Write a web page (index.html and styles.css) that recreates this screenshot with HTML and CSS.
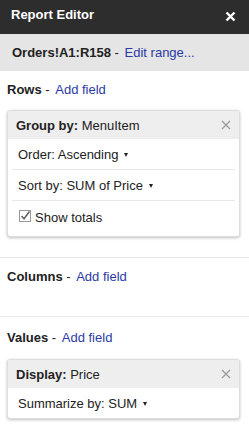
FILE: index.html
```html
<!DOCTYPE html>
<html lang="en">
<head>
    <meta charset="UTF-8">
    <meta name="viewport" content="width=device-width, initial-scale=1.0">
    <title>Report Editor</title>
    <link rel="stylesheet" href="styles.css">
</head>
<body>
    <div id="editor">
        <div class="title-bar">
            <span class="title">Report Editor</span>
            <svg class="close-white" width="11" height="11" viewBox="0 0 11 11">
                <path d="M1.5 1.5 L9.5 9.5 M9.5 1.5 L1.5 9.5" stroke="#fff" stroke-width="2.4"/>
            </svg>
        </div>
        <div class="range-bar">
            <span class="strong">Orders!A1:R158</span> - <a href="#" class="link">Edit range...</a>
        </div>

        <div class="section">
            <div class="section-label"><span class="strong">Rows</span> - <a href="#" class="link">Add field</a></div>
            <div class="card">
                <div class="card-head">
                    <span><span class="strong">Group by:</span> MenuItem</span>
                    <svg class="close-grey" width="10" height="10" viewBox="0 0 10 10">
                        <path d="M1 1 L9 9 M9 1 L1 9" stroke="#999" stroke-width="1.2"/>
                    </svg>
                </div>
                <div class="card-row">Order: Ascending <span class="caret"></span></div>
                <div class="card-row">Sort by: SUM of Price <span class="caret"></span></div>
                <div class="card-row row-check">
                    <svg class="check" width="12" height="12" viewBox="0 0 12 12">
                        <rect x="0.5" y="0.5" width="11" height="11" fill="#fff" stroke="#9a9a9a"/>
                        <path d="M2.5 6 L5 8.8 L10.5 1.5" fill="none" stroke="#666" stroke-width="1.6"/>
                    </svg>
                    Show totals
                </div>
            </div>
        </div>

        <div class="section section-empty">
            <div class="section-label"><span class="strong">Columns</span> - <a href="#" class="link">Add field</a></div>
        </div>

        <div class="section section-last">
            <div class="section-label"><span class="strong">Values</span> - <a href="#" class="link">Add field</a></div>
            <div class="card">
                <div class="card-head">
                    <span><span class="strong">Display:</span> Price</span>
                    <svg class="close-grey" width="10" height="10" viewBox="0 0 10 10">
                        <path d="M1 1 L9 9 M9 1 L1 9" stroke="#999" stroke-width="1.2"/>
                    </svg>
                </div>
                <div class="card-row">Summarize by: SUM <span class="caret"></span></div>
            </div>
        </div>
    </div>
</body>
</html>
```

FILE: styles.css
```css
body {
    font-family: Arial, "Liberation Sans", sans-serif;
    font-size: 13px;
    color: #222;
    margin: 0;
    padding: 0;
    background-color: #fff;
}

.strong {
    font-weight: bold;
}

.link {
    color: #2b3aa6;
    text-decoration: none;
    margin-left: 2px;
}

.title-bar {
    height: 34px;
    background: #2d2d2d;
    display: flex;
    align-items: center;
    justify-content: space-between;
    padding: 0 13px 0 11px;
}

.title {
    color: #fff;
    font-weight: bold;
    font-size: 13px;
    margin-top: -5px;
}

.close-white {
    margin-top: -2px;
}

.range-bar {
    height: 37px;
    line-height: 38px;
    background: #e5e5e5;
    padding-left: 12px;
    color: #222;
}

.section {
    padding: 11px 9px 20px 7px;
    border-bottom: 1px solid #e8e8e8;
}

.section-last {
    padding-top: 13px;
    border-bottom: none;
}

.section-label {
    line-height: 16px;
    margin-bottom: 12px;
}

.section-empty .section-label {
    margin-bottom: 11px;
}

.section-last .section-label {
    margin-bottom: 13px;
}

.card {
    border: 1px solid #ddd;
    border-radius: 3px;
    box-shadow: 0 1px 3px rgba(0, 0, 0, 0.25);
    background: #fff;
    overflow: hidden;
}

.card-head {
    height: 28px;
    background: #eee;
    display: flex;
    align-items: center;
    justify-content: space-between;
    padding: 0 8px 0 8px;
}

.card-row {
    height: 30px;
    display: flex;
    align-items: center;
    margin: 0 4px 0 4px;
    padding: 0 6px;
    border-top: 1px solid #e8e8e8;
}

.card-head + .card-row {
    border-top: none;
}

.row-check {
    height: 36px;
    padding-bottom: 3px;
    box-sizing: border-box;
}

.caret {
    display: inline-block;
    width: 0;
    height: 0;
    border-left: 2.5px solid transparent;
    border-right: 2.5px solid transparent;
    border-top: 4px solid #222;
    margin-left: 6px;
    margin-top: 1px;
}

.check {
    margin-left: 1px;
    margin-right: 4px;
    margin-top: -2px;
}
```
